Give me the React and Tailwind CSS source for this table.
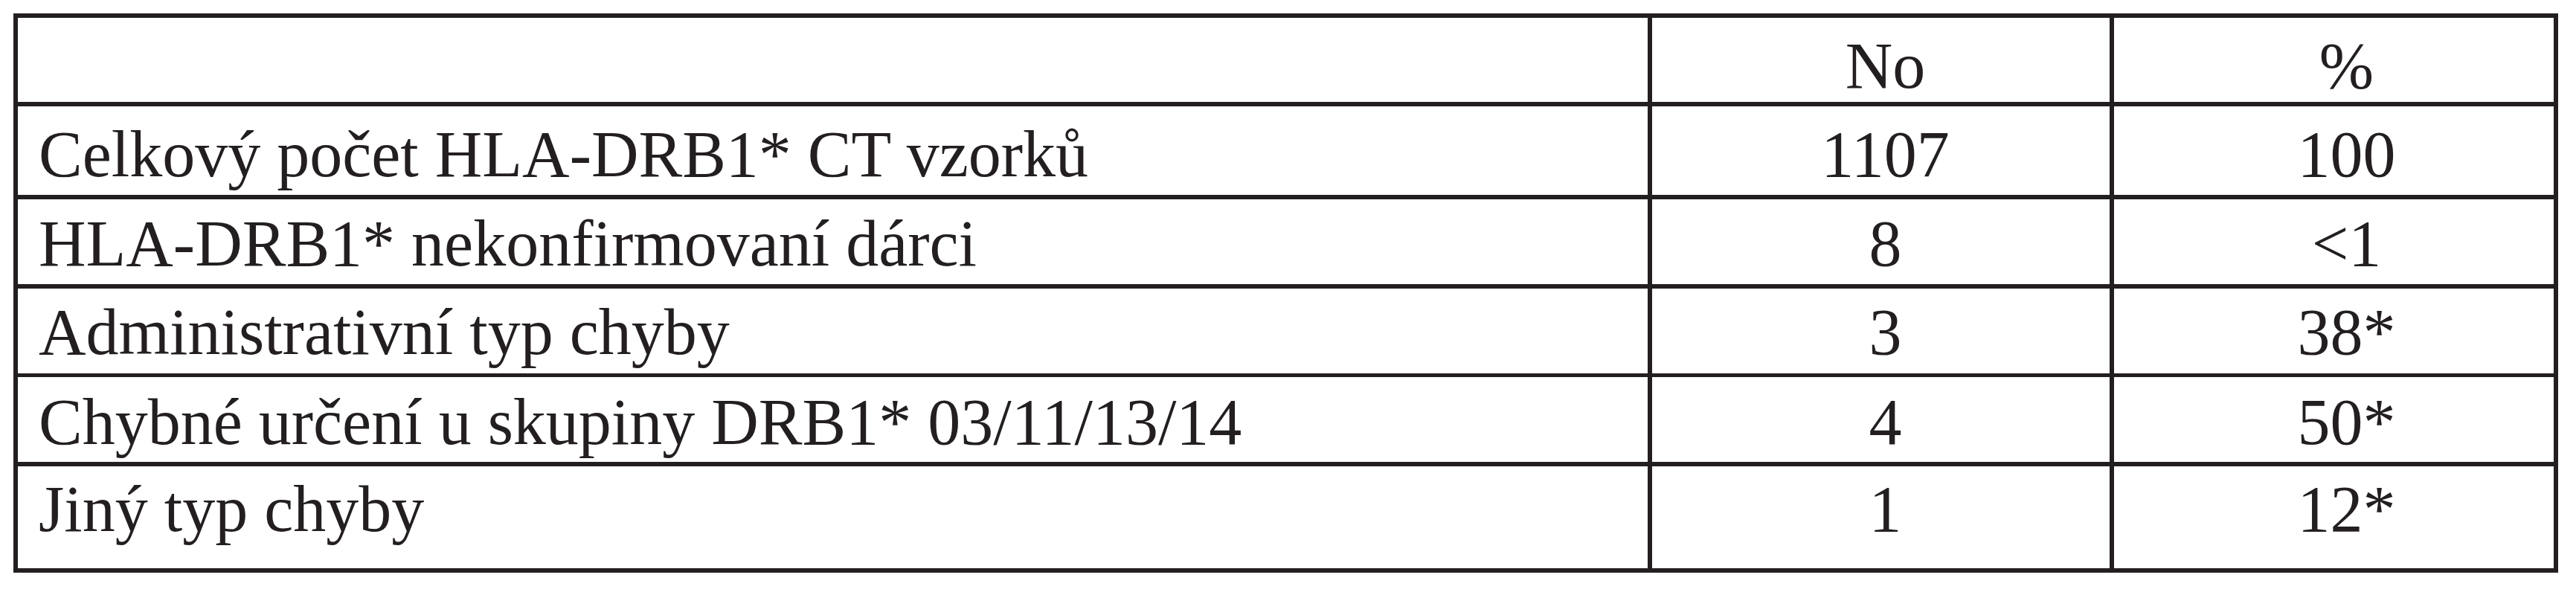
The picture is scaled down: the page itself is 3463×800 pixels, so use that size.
import React from "react";

const rows = [
  { label: "", no: "No", pct: "%", h: "h-[119px]", border: "border-b-[6px]", pt: "pt-[21px]" },
  { label: "Celkový počet HLA-DRB1* CT vzorků", no: "1107", pct: "100", h: "h-[125px]", border: "border-b-[6px]", pt: "pt-[21px]" },
  { label: "HLA-DRB1* nekonfirmovaní dárci", no: "8", pct: "<1", h: "h-[120px]", border: "border-b-[6px]", pt: "pt-[16px]" },
  { label: "Administrativní typ chyby", no: "3", pct: "38*", h: "h-[119px]", border: "border-b-[5px]", pt: "pt-[15px]" },
  { label: "Chybné určení u skupiny DRB1* 03/11/13/14", no: "4", pct: "50*", h: "h-[120px]", border: "border-b-[6px]", pt: "pt-[17px]" },
  { label: "Jiný typ chyby", no: "1", pct: "12*", h: "h-[137px]", border: "", pt: "pt-[14px]" },
];

const App = () => {
  return (
    <div className="min-h-screen bg-white pt-[18px] pl-[18px]">
      <div
        className="w-[3421px] border-[6px] border-[#231f20] text-[#231f20] text-[88px] leading-[88px] whitespace-nowrap"
        style={{ fontFamily: '"Liberation Serif", "Times New Roman", serif' }}
      >
        {rows.map((row, i) => (
          <div key={i} className={`flex border-[#231f20] ${row.h} ${row.border}`}>
            <div className={`w-[2197px] border-r-[6px] border-[#231f20] pl-[28px] ${row.pt}`}>
              {row.label}
            </div>
            <div className={`w-[621px] border-r-[6px] border-[#231f20] text-center pl-[12px] ${row.pt}`}>
              {row.no}
            </div>
            <div className={`w-[591px] text-center pl-[34px] ${row.pt}`}>{row.pct}</div>
          </div>
        ))}
      </div>
    </div>
  );
};

export default App;
